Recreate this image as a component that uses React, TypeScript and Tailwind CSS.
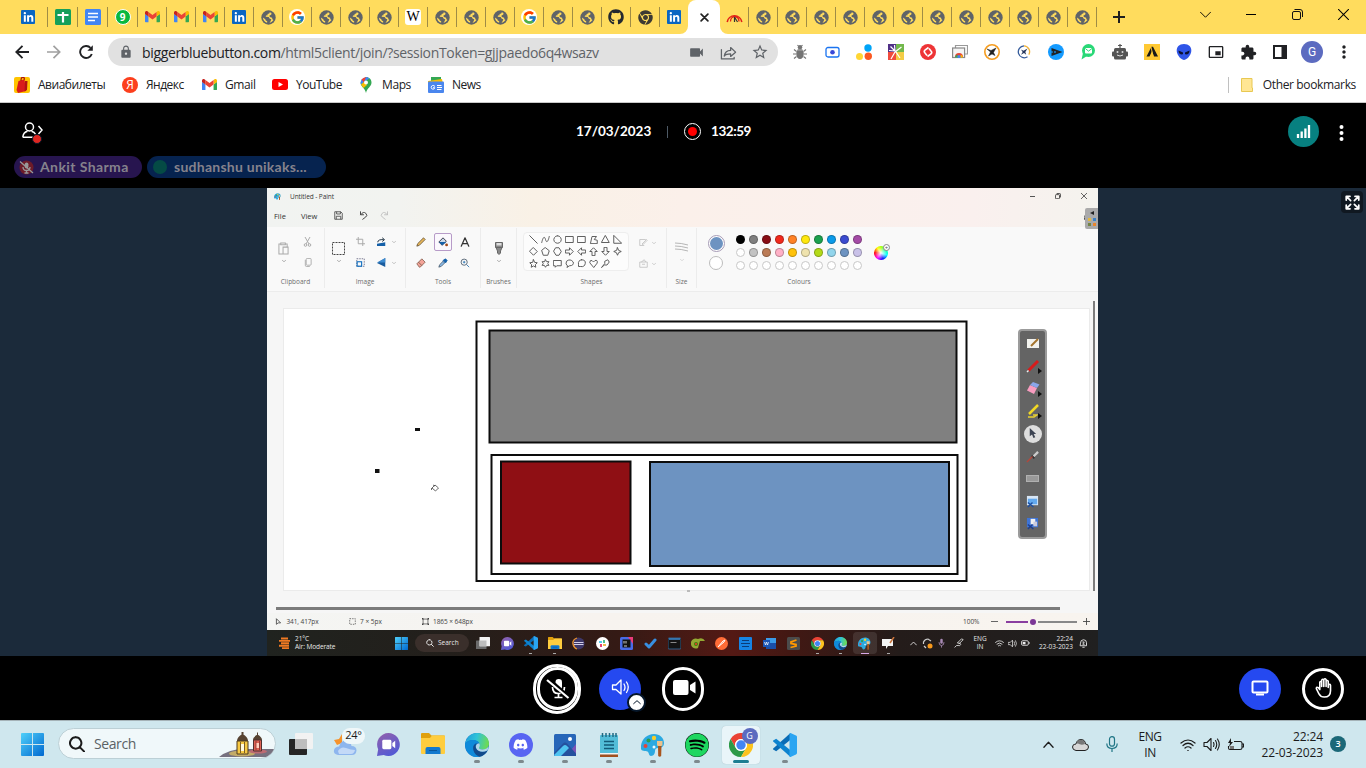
import React from "react";
import { MdLock, MdVideocam, MdStarBorder, MdExtension, MdMoreVert, MdPictureInPictureAlt } from "react-icons/md";
import { FcGoogle } from "react-icons/fc";
import { FaGithub, FaDiscord, FaSpotify, FaLinkedinIn, FaChrome } from "react-icons/fa";

type SP = { w?: number; h?: number; v?: string; c?: string; children: React.ReactNode };
const S = ({ w = 16, h, v = "0 0 24 24", c = "", children }: SP) => (
  <svg width={w} height={h ?? w} viewBox={v} fill="none" className={"shrink-0 " + c}>
    {children}
  </svg>
);
const Line = ({ w = 12, d, c = "", sw = 1.5, v }: { w?: number; d: string; c?: string; sw?: number; v?: string }) => (
  <S w={w} c={c} v={v}>
    <path d={d} stroke="currentColor" strokeWidth={sw} strokeLinecap="round" strokeLinejoin="round" />
  </S>
);

/* ---------- logos ---------- */
const LinkedIn = () => (
  <div className="flex h-3.5 w-3.5 items-center justify-center rounded-[1px] bg-[#0a66c2] text-white">
    <FaLinkedinIn size={11} />
  </div>
);
const Globe = () => (
  <S w={15} v="0 0 15 15">
    <circle cx="7.500" cy="7.500" r="7.200" fill="#5f6368" />
    <path d="M8.800 2.300L8.200 3.500 6.500 4 6.600 5.300 5 5.600 4.700 6.700 7.700 6.900 8.800 8.700 10.300 9.300 9.700 11 8.500 12.900Q11.200 12.300 12.500 10L11.400 9.200 11.100 7.700 8.900 7.100 8.300 5.700 10.300 4.600 10.500 3z" fill="#ffdc5d" />
    <path d="M1.900 7.600L4.300 9.300 4.800 10.500 6.200 11.300 6.100 12.800Q2.200 11.600 1.900 7.600z" fill="#ffdc5d" />
  </S>
);
const Google = () => (
  <div className="flex h-4 w-4 items-center justify-center rounded-full bg-white">
    <FcGoogle size={15} />
  </div>
);
const Gmail = ({ w = 15 }: { w?: number }) => (
  <S w={w} h={w * 0.75} v="0 0 24 18">
    <path fill="#4285f4" d="M1.600 18h3.900V8.700L0 4.500v11.900C0 17.300.7 18 1.600 18z" />
    <path fill="#34a853" d="M18.500 18h3.900c.9 0 1.600-.7 1.600-1.600V4.500l-5.500 4.200z" />
    <path fill="#fbbc04" d="M18.500 1.600v7.100L24 4.600V2.500c0-2-2.300-3.200-3.900-2z" />
    <path fill="#ea4335" d="M5.500 8.700V1.600L12 6.500l6.500-4.900v7.100L12 13.600z" />
    <path fill="#c5221f" d="M0 2.500v2.100l5.500 4.100V1.600L3.900.5C2.300-.7 0 .5 0 2.500z" />
  </S>
);
const Chrome = ({ w = 24 }: { w?: number }) => (
  <S w={w}>
    <path fill="#ea4335" d="M12 6h10.400A12 12 0 0 0 1.600 6l5.200 9A6 6 0 0 1 12 6z" />
    <path fill="#2d9a48" d="M6.800 15L1.600 6A12 12 0 0 0 12 24l5.200-9A6 6 0 0 1 6.800 15z" />
    <path fill="#fcc31e" d="M12 6h10.400A12 12 0 0 1 12 24l5.200-9A6 6 0 0 0 12 6z" />
    <circle cx="12" cy="12" r="6" fill="#fff" />
    <circle cx="12" cy="12" r="4.700" fill="#4285f4" />
  </S>
);
const Edge = ({ w = 24 }: { w?: number }) => (
  <S w={w}>
    <defs>
      <linearGradient id="eg" x1="0" y1="0" x2="24" y2="6" gradientUnits="userSpaceOnUse">
        <stop stopColor="#1f9bdc" />
        <stop offset=".5" stopColor="#2fc3d8" />
        <stop offset="1" stopColor="#6edb52" />
      </linearGradient>
    </defs>
    <circle cx="12" cy="12" r="12" fill="#1272c4" />
    <path fill="url(#eg)" d="M0 11C1 4.500 6 0 12 0c7 0 12 5 12 10.500 0 4-3 6-6.500 6-3 0-4.300-1.300-3.500-2.500C15.500 11.500 14 8 10 7.300 6 6.600 2 8 0 11z" />
    <path fill="#0f8ada" d="M0 11c2-3 6-4.500 10-3.700 2 .4 3.300 1.500 4 2.700-3-.5-5.800 1.500-5.800 5 0 4 2.600 7.300 6.300 8.700C7 25.500 0 19.500 0 11z" />
    <path fill="#114a8b" d="M8.200 15c0-2.300 1.300-4 3.300-4.700-1 1.600-1.300 3-.3 5 1.300 3 5.500 4.800 11.300 2.200-1.500 3.300-4.500 5.600-8 6.200-3.700-1.400-6.300-4.700-6.300-8.700z" />
    <path fill="#cfe7ee" d="M14.100 10.300c1 1.400.9 2.700.2 3.700-.9 1.200.2 2.500 3.200 2.500 2.500 0 4.800-1 5.900-2.900.3 1.300-.4 3-1 3.900-5 2.400-9.800 1-11.200-2.200-1-2.200.4-4.800 2.900-5z" opacity=".85" />
  </S>
);
const VSCode = ({ w = 24 }: { w?: number }) => (
  <S w={w}>
    <path fill="#0a6cb5" d="M17.500 0v6.700L3.200 18.200.2 16.500c-.3-.3-.3-.8 0-1.100z" />
    <path fill="#0d83cf" d="M17.500 24v-6.700L3.200 5.800.2 7.500c-.3.3-.3.800 0 1.100z" />
    <path fill="#2aa5f2" d="M17.500 0L23 2.500c.6.300 1 .8 1 1.400v16.200c0 .6-.4 1.100-1 1.400L17.500 24c-.7 0-.7 0-1-.5V.5z" />
  </S>
);
const WinLogo = ({ w = 23 }: { w?: number }) => (
  <S w={w}>
    <defs>
      <linearGradient id="wl" x1="0" y1="0" x2="24" y2="24" gradientUnits="userSpaceOnUse">
        <stop stopColor="#4fd0fa" />
        <stop offset="1" stopColor="#0068d0" />
      </linearGradient>
    </defs>
    <path fill="url(#wl)" d="M0 1q0-1 1-1h10.500v11.500H0zM12.500 0H23q1 0 1 1v10.500H12.500zM0 12.500h11.500V24H1q-1 0-1-1zM12.500 12.500H24V23q0 1-1 1H12.500z" />
  </S>
);
const TaskView = ({ w = 24, dark = true }: { w?: number; dark?: boolean }) => (
  <S w={w} h={w * 0.92} v="0 0 24 22">
    <rect x="0" y="6" width="18" height="16" rx="1" fill={dark ? "#252525" : "#6b6b6b"} />
    <rect x="6" y="0" width="18" height="16" rx="1" fill="#f2f2f2" />
    <rect x="6" y="6" width="12" height="10" fill="#bdbdbd" />
  </S>
);
const Chat = ({ w = 23 }: { w?: number }) => (
  <S w={w}>
    <defs>
      <linearGradient id="ct" x1="4" y1="0" x2="16" y2="24" gradientUnits="userSpaceOnUse">
        <stop stopColor="#9061ae" />
        <stop offset="1" stopColor="#5059d6" />
      </linearGradient>
    </defs>
    <path fill="url(#ct)" d="M12 0a12 12 0 1 1-5 23L0 24l1.200-7A12 12 0 0 1 12 0z" />
    <rect x="5.500" y="7" width="9.500" height="10" rx="1.500" fill="#fff" />
    <path d="M16 10.500l3-2.500v8l-3-2.500z" fill="#fff" />
  </S>
);
const Folder = ({ w = 24 }: { w?: number }) => (
  <S w={w} h={w * 0.92} v="0 0 24 22">
    <path fill="#e0a00c" d="M0 1q0-1 1-1h7l2.500 2.500H23q1 0 1 1V10H0z" />
    <path fill="#ffcd3e" d="M0 5h9l2-2.500h12q1 0 1 1V20q0 1-1 1H1q-1 0-1-1z" />
    <path fill="#1279cf" d="M4.500 21v-5q0-2 2-2h11q2 0 2 2v5z" />
    <path stroke="#0a5599" d="M8 17.500h8" />
  </S>
);
const Palette = ({ w = 24 }: { w?: number }) => (
  <S w={w}>
    <path fill="#2ba9e1" d="M13 1c6 0 10 4 10 9 0 4-3 5-6 5-2 0-3 1-3 3s-1 5-4 5c-2 0-2-3-3-4-1-1.500-6 0-7-3C-1 8 5 1 13 1z" />
    <circle cx="13" cy="5" r="2.200" fill="#f8ce2a" />
    <circle cx="7.500" cy="7.500" r="2" fill="#2d9b4a" />
    <circle cx="4.500" cy="13" r="2" fill="#e2453a" />
    <circle cx="13" cy="14" r="1.500" fill="#e9f8ff" />
    <path fill="#a9551d" d="M17 12h3.500l-.3 11q-1.500 1.500-3 0z" />
    <path fill="#ecc28c" d="M16 8h5.500v4.500q-2.700 1-5.500 0z" />
  </S>
);

/* ---------- tab strip ---------- */
const Tab = ({ children, wide, last }: { children: React.ReactNode; wide?: boolean; last?: boolean }) => (
  <div className={"flex h-5 shrink-0 items-center justify-center " + (last ? "w-7 " : "border-r border-[#a08c45] ") + (wide ? "w-[30px]" : last ? "" : "w-[29px]")}>
    {children}
  </div>
);
const TabStrip = () => (
  <div className="flex h-[34px] items-center bg-[#ffdc5d]">
    <div className="flex h-5 w-12 shrink-0 items-center border-r border-[#a08c45] pl-[21px]"><LinkedIn /></div>
    <Tab wide>
      <S w={16} v="0 0 16 16"><rect width="16" height="16" rx="1.500" fill="#159f5a" /><path d="M2.500 6h11M8 3v10.500" stroke="#fff" strokeWidth="2.200" /></S>
    </Tab>
    <Tab wide>
      <S w={16} v="0 0 16 16"><rect width="16" height="16" rx="1.500" fill="#4285f4" /><path d="M3 4.500h10M3 8h10M3 11.500h7" stroke="#fff" strokeWidth="1.600" /></S>
    </Tab>
    <Tab wide>
      <div className="flex h-4 w-4 items-center justify-center rounded-full border border-white bg-[#09b83e] font-['Open_Sans',sans-serif] text-[10px] font-bold leading-none text-white">9</div>
    </Tab>
    <Tab><Gmail /></Tab><Tab><Gmail /></Tab><Tab><Gmail /></Tab>
    <Tab><LinkedIn /></Tab>
    <Tab><Globe /></Tab><Tab><Google /></Tab>
    <Tab><Globe /></Tab><Tab><Globe /></Tab><Tab><Globe /></Tab>
    <Tab>
      <div className="flex h-4 w-4 items-center justify-center rounded-[3px] bg-white font-['Liberation_Serif',serif] text-[14px] leading-none text-black">W</div>
    </Tab>
    <Tab><Globe /></Tab><Tab><Globe /></Tab><Tab><Globe /></Tab>
    <Tab><Google /></Tab><Tab><Globe /></Tab><Tab><Globe /></Tab>
    <Tab><FaGithub size={16} className="text-[#24292f]" /></Tab>
    <Tab><FaChrome size={15} className="text-[#3d3a33]" /></Tab>
    <Tab last><LinkedIn /></Tab>
    <div className="relative flex h-[34px] w-8 shrink-0 items-center justify-center rounded-t-lg bg-white">
      <Line w={9} d="M3 3l18 18M21 3L3 21" sw={4.500} c="text-[#222]" />
      <S w={8} v="0 0 8 8" c="absolute bottom-0 -left-2"><path d="M8 0v8H0a8 8 0 0 0 8-8z" fill="#fff" /></S>
      <S w={8} v="0 0 8 8" c="absolute bottom-0 -right-2"><path d="M0 0v8h8a8 8 0 0 1-8-8z" fill="#fff" /></S>
    </div>
    <Tab>
      <S w={17} h={11} v="0 0 17 11">
        <path d="M1.200 10A7.400 7.400 0 0 1 15.800 10" stroke="#e32118" strokeWidth="1.600" />
        <path d="M4.500 9.500C4.500 6 7 4.500 9 4.500M8 4.500c4 0 5 2.500 5 5" stroke="#e32118" strokeWidth="1.300" />
        <path d="M8.500 5v5M8.500 5l3 5" stroke="#333" strokeWidth="1.200" />
      </S>
    </Tab>
    {Array.from({ length: 12 }, (_, i) => <Tab key={i}><Globe /></Tab>)}
    <div className="flex w-11 justify-center"><Line w={12} d="M12 1v22M1 12h22" sw={4} c="text-[#1f1f1f]" /></div>
    <div className="ml-auto flex h-[28px] items-center self-start">
      <div className="flex w-[46px] justify-center"><Line w={11} d="M1 7l11 11L23 7" sw={2} /></div>
      <div className="flex w-[46px] justify-center"><div className="h-px w-2.5 bg-black" /></div>
      <div className="flex w-[46px] justify-center">
        <S w={11} v="0 0 11 11"><rect x=".5" y="2.500" width="8" height="8" rx="1.500" stroke="#111" /><path d="M2.500.5H8q2.500 0 2.500 2.500v5" stroke="#111" /></S>
      </div>
      <div className="flex w-[46px] justify-center"><Line w={11} d="M1 1l22 22M23 1L1 23" sw={2.200} /></div>
    </div>
  </div>
);

/* ---------- toolbar ---------- */
const Ext = ({ children }: { children: React.ReactNode }) => <div className="flex h-8 w-8 shrink-0 items-center justify-center">{children}</div>;
const Toolbar = () => (
  <div className="flex h-9 items-center bg-white pr-1.5 text-[#202124]">
    <div className="flex w-[108px] items-center pl-[6px]">
      <Ext><S w={14} v="0 0 14 14"><path d="M14 7H1.500M7.500.8L1.300 7l6.200 6.200" stroke="#202124" strokeWidth="1.900" /></S></Ext>
      <Ext><S w={14} v="0 0 14 14"><path d="M0 7h12.500M6.500.8L12.700 7l-6.200 6.200" stroke="#a0a0a0" strokeWidth="1.700" /></S></Ext>
      <Ext><S w={14} v="0 0 14 14"><path d="M12.800 9a6 6 0 1 1-1.300-6.200" stroke="#202124" strokeWidth="1.900" /><path d="M13.800.3v5.400H8.400z" fill="#202124" /></S></Ext>
    </div>
    <div className="flex h-7 w-[670px] shrink-0 items-center rounded-full bg-[#e1e1e1] pr-0.5 pl-[11px] text-[#5f6368]">
      <MdLock size={14} />
      <div className="ml-[9px] w-[538px] font-['Open_Sans',sans-serif] text-[14px] tracking-[-0.34px] whitespace-nowrap">
        <span className="text-[#202124]">biggerbluebutton.com</span>/html5client/join/?sessionToken=gjjpaedo6q4wsazv
      </div>
      <Ext><MdVideocam size={17} /></Ext>
      <Ext><Line w={17} d="M2 8v13h18v-2M6 17c1-6 5-8 9-8V5l7 6.500-7 6V14c-4 0-7 .5-9 3z" sw={1.800} /></Ext>
      <Ext><MdStarBorder size={18} /></Ext>
    </div>
    <div className="flex flex-1 items-center justify-end">
      <Ext>
        <S w={16} v="0 0 16 16">
          <ellipse cx="8" cy="9.800" rx="3.800" ry="5.200" fill="#747474" /><circle cx="8" cy="3.300" r="2.200" fill="#747474" />
          <path d="M5.500 1l1.200 1.500M10.500 1L9.300 2.500M4.500 7.500L2 5.500M4 10H1M4.500 12.500L2 14.500M11.500 7.500L14 5.500M12 10h3M11.500 12.500l2.500 2" stroke="#747474" strokeWidth="1.100" />
          <path d="M5 6h6" stroke="#bdbdbd" strokeWidth=".8" />
        </S>
      </Ext>
      <Ext><S w={15} v="0 0 15 15"><rect x="1" y="2.500" width="13" height="9.500" rx="2" stroke="#1a73f0" strokeWidth="1.300" /><circle cx="7.500" cy="7.300" r="2.300" fill="#3949d8" /></S></Ext>
      <Ext><S w={16} v="0 0 16 16"><circle cx="12" cy="4" r="3.700" fill="#00a4f8" /><circle cx="3.500" cy="12.500" r="3.500" fill="#ffd633" /><circle cx="12.300" cy="12.300" r="3.700" fill="#fb5821" /></S></Ext>
      <Ext>
        <S w={16} v="0 0 16 16">
          <path fill="#503087" d="M0 0h8v8H0z" /><path fill="#72b84b" d="M8 0h8v8H8z" /><path fill="#f04b3d" d="M0 8h8v8H0z" /><path fill="#f3cc45" d="M8 8h8v8H8z" />
          <path d="M7 7L2.500 2.500M7 7L6.500 1M7 7L1 6.500M7 8l6.500-5M7 8L3 15M8 8l4 6" stroke="#fff" strokeWidth="1.200" />
        </S>
      </Ext>
      <Ext><S w={16} v="0 0 16 16"><circle cx="8" cy="8" r="8" fill="#ee3436" /><path d="M8.500 3.500L5 6q-1.500 1.500 0 3l2 2.500M7.500 12.500L11 10q1.500-1.500 0-3L9 4.500" stroke="#fff" strokeWidth="1.600" /></S></Ext>
      <Ext>
        <S w={16} v="0 0 16 16">
          <path d="M3.500 4V1.500h12V10H13" stroke="#999" strokeWidth="1.200" /><rect x=".6" y="4" width="12" height="9.500" stroke="#888" strokeWidth="1.200" fill="#f4f4f4" />
          <path d="M3 13a4 4 0 0 1 8 0z" fill="#ea4335" /><path d="M3 13.500a4 4 0 0 1 2-3l1.500 3z" fill="#34a853" /><path d="M11 13.500a4 4 0 0 0-2-3l-1 3z" fill="#fbbc04" /><circle cx="7" cy="12.500" r="1.600" fill="#4285f4" />
        </S>
      </Ext>
      <Ext><S w={16} v="0 0 16 16"><circle cx="8" cy="8" r="7.200" stroke="#f59d20" strokeWidth="1.600" /><path d="M3 5l4 1.500 5-2.500-2.500 4.500 1.500 3-3-1.500-3.500 2L6.500 8z" fill="#222" stroke="#222" strokeWidth=".5" /></S></Ext>
      <Ext><S w={14} v="0 0 16 16"><path d="M12 13.500A6.800 6.800 0 1 1 8 1" stroke="#365c9c" strokeWidth="1.500" /><path d="M8 1a6.700 6.700 0 0 1 5.500 10" stroke="#f2b43d" strokeWidth="1.500" /><path d="M4.500 5l3 1.500L12 4 9.500 8l1 3L8 9l-3.500 2L6.500 8z" fill="#24365c" /></S></Ext>
      <Ext><S w={16} v="0 0 16 16"><circle cx="8" cy="8" r="8" fill="#159bff" /><path d="M3.500 4L14.500 8 3.500 12z" fill="#222" /><path d="M0 8h5M7 7v2" stroke="#159bff" strokeWidth="1.200" /></S></Ext>
      <Ext><S w={16} v="0 0 16 16"><circle cx="8.500" cy="6.500" r="6.500" fill="#29d877" /><path d="M3 9L1.500 15.500 7 12z" fill="#29d877" /><rect x="5" y="4" width="7" height="5.500" rx="1" fill="#fff" /><path d="M5.300 4.500l3.200 2.600L12 4.500" stroke="#29d877" /></S></Ext>
      <Ext><S w={16} v="0 0 16 16"><path d="M8 0v4M6 1.500h4" stroke="#555" strokeWidth="1.200" /><rect x="2" y="4" width="12" height="11.500" rx="1.500" fill="#555" /><rect y="7.500" width="16" height="5" rx="1" fill="#555" /><circle cx="5.500" cy="8" r="1" fill="#ddd" /><circle cx="10.500" cy="8" r="1" fill="#ddd" /><path d="M5 11q3 2 6 0" stroke="#ddd" /></S></Ext>
      <Ext><S w={16} v="0 0 16 16"><path fill="#ffc933" d="M0 0h16v16H0z" /><path d="M2.500 12.500h3L8 7l2 5.500h4L9 2.800H7.500z" fill="#181818" /><path d="M7 3l2 9" stroke="#ffc933" strokeWidth=".9" /></S></Ext>
      <Ext><S w={16} v="0 0 16 16"><path fill="#2f55e8" d="M8 0c5 0 7.500 3 7.300 7C15 12 10 16 8 16S1 12 .7 7C.5 3 3 0 8 0z" /><path d="M2.500 6.500l4.500 2q.5 2-1 2-3.500 0-3.500-4zM13.500 6.500L9 8.500q-.5 2 1 2 3.500 0 3.500-4z" fill="#0b1032" /></S></Ext>
      <Ext><MdPictureInPictureAlt size={16} /></Ext>
      <Ext><MdExtension size={17} /></Ext>
      <Ext><S w={14} v="0 0 14 14"><rect x="1" y="1" width="12" height="12" stroke="#202124" strokeWidth="2" /><path d="M8.500 1H13v12H8.500z" fill="#202124" /></S></Ext>
      <Ext><div className="flex h-[22px] w-[22px] items-center justify-center rounded-full bg-[#5c6bc0] font-['Roboto',sans-serif] text-[12px] text-white">G</div></Ext>
      <Ext><MdMoreVert size={20} /></Ext>
    </div>
  </div>
);

const Bm = ({ icon, label, c, t = "tracking-[-0.2px]" }: { icon: React.ReactNode; label: string; c: string; t?: string }) => (
  <div className={"flex shrink-0 items-center gap-2 " + c}>
    <div className="flex w-4 shrink-0 justify-center">{icon}</div>
    <span className={"whitespace-nowrap leading-4 " + t}>{label}</span>
  </div>
);
const Bookmarks = () => (
  <div className="flex h-[33px] items-center border-b border-[#c9c9c9] bg-white pr-2.5 pb-[3px] pl-3.5 font-['Open_Sans',sans-serif] text-[12px] text-[#202124]">
    <Bm c="w-[108px]" t="tracking-[-0.48px]" label="Авиабилеты" icon={<S w={16} v="0 0 16 16"><rect width="16" height="16" rx="2" fill="#ffc400" /><path d="M4.500 4l6-1.500L12 14l-8 2-1.500-3z" fill="#d91b1b" /><path d="M7 4q0-4 2-3.700Q11 .5 10 3" stroke="#a11" strokeWidth="1.200" /><path d="M11 4h2.500L13 13l-2.500 1.500z" fill="#b31212" /></S>} />
    <Bm c="w-[79px]" t="tracking-[-0.5px]" label="Яндекс" icon={<div className="flex h-4 w-4 items-center justify-center rounded-full bg-[#fc3f1d] text-[12px] leading-none text-white">Я</div>} />
    <Bm c="w-[71px]" t="tracking-[-0.4px]" label="Gmail" icon={<Gmail />} />
    <Bm c="w-[86px]" t="tracking-[-0.48px]" label="YouTube" icon={<S w={16} h={11} v="0 0 16 11"><rect width="16" height="11" rx="2.500" fill="#f00" /><path d="M6.500 3l4.500 2.500L6.500 8z" fill="#fff" /></S>} />
    <Bm c="w-[70px]" t="tracking-[-0.4px]" label="Maps" icon={<S w={16} v="0 0 16 16"><path d="M8 0c3 0 5.500 2.300 5.500 5.500C13.500 9.500 9 11 8 16 7 11 2.500 9.500 2.500 5.500z" fill="#34a853" /><path d="M8 0L3.500 2.500Q2 5 3 7.500L8 3.500 11.500 1.500Q10 0 8 0z" fill="#4285f4" /><path d="M3.500 2.500Q5 .5 8 0L6 5.500z" fill="#ea4335" /><path d="M3 7.500L6 5l3 3-3.500 3z" fill="#fbbc04" /><circle cx="8" cy="5.500" r="2" fill="#fff" /></S>} />
    <Bm c="" t="tracking-[-0.5px]" label="News" icon={<S w={16} v="0 0 16 16"><path d="M3 0h10v6H3z" fill="#34a853" /><path d="M0 4l14-2 1 5H0z" fill="#fbbc04" /><rect y="4.500" width="16" height="11.500" rx="1" fill="#4a86ee" /><path d="M7 9.500q-1-1.200-2.300-1-1.500.3-1.500 2 0 1.500 1.700 1.700 1.800 0 1.800-1.500H5M9 8.500h4.500M9 10.500h5M9 12.500h4.500" stroke="#fff" /></S>} />
    <div className="ml-auto flex items-center">
      <div className="h-4 w-px bg-[#c0c0c0]" />
      <S w={12} h={14} v="0 0 12 14" c="ml-3 mr-2.5"><path d="M.5.500h10.500V10h.5v3.500H.5z" fill="#ffe694" stroke="#e8c852" /></S>
      <span className="leading-4 tracking-[-0.35px]">Other bookmarks</span>
    </div>
  </div>
);

/* ---------- meeting ---------- */
const MeetingHeader = () => (
  <div className="flex h-[85px] flex-col bg-black font-['Lato',sans-serif]">
    <div className="flex h-[57px] items-center">
      <div className="relative ml-[22px] flex h-6 w-[554px] items-start text-white">
        <S w={21} h={17} v="0 0 21 17" c="mt-[2px]">
          <circle cx="7.500" cy="5" r="4" stroke="#fff" strokeWidth="1.500" />
          <path d="M.8 15.200q.4-5 4.700-6M9.500 9.200q3 .8 4 3M.8 15.200h10M16.500 4l3.500 4-3.500 4" stroke="#fff" strokeWidth="1.500" />
        </S>
        <div className="absolute top-[14px] left-[10px] h-2.5 w-2.5 rounded-full border border-[#06172a] bg-[#df2721]" />
      </div>
      <div className="flex items-center text-[13.500px] font-bold leading-none text-white">
        <span className="w-[91px] pt-px">17/03/2023</span>
        <span className="h-3 w-px bg-[#4e5a66]" />
        <div className="mr-2.5 ml-[16px] flex h-[17px] w-[17px] items-center justify-center rounded-full border-[1.5px] border-white"><div className="h-[9px] w-[9px] rounded-full bg-[#f00]" /></div>
        <span className="pt-px tracking-[-0.45px]">132:59</span>
      </div>
      <div className="ml-auto flex items-center">
        <div className="flex h-[31px] w-[31px] items-center justify-center rounded-full bg-[#078080]">
          <S w={15} v="0 0 15 15"><path d="M2 10v4M5.700 7.500V14M9.400 4.500V14M13 1v13" stroke="#fff" strokeWidth="2.300" /></S>
        </div>
        <S w={5} h={16} v="0 0 5 16" c="mr-[22px] ml-[20px] mt-0.5"><circle cx="2.500" cy="2" r="2" fill="#fff" /><circle cx="2.500" cy="8" r="2" fill="#fff" /><circle cx="2.500" cy="14" r="2" fill="#fff" /></S>
      </div>
    </div>
    <div className="flex h-[22px] -translate-y-1 gap-[5px] pl-3.5 text-[14px] font-bold text-[#85828c]">
      <div className="flex w-32 items-center rounded-full bg-[#27154f] pl-[5px]">
        <S w={15} v="0 0 15 15"><circle cx="7.500" cy="7.500" r="7" fill="#6d1b28" /><rect x="5.800" y="2.500" width="3.600" height="6" rx="1.800" fill="#999" /><path d="M4 7q0 3.500 3.500 3.500T11 7M7.500 10.500V13M5.500 13h4M1 1.500L14 13" stroke="#999" strokeWidth="1.300" /></S>
        <span className="ml-1.5 pb-0.5 tracking-[0.4px]">Ankit Sharma</span>
      </div>
      <div className="flex w-[179px] items-center rounded-full bg-[#06234f] pl-[6px]">
        <div className="h-3.5 w-3.5 rounded-full bg-[#054b45]" />
        <span className="ml-[7px] pb-0.5 tracking-[0.25px]">sudhanshu unikaks...</span>
      </div>
    </div>
  </div>
);

/* ---------- paint window ---------- */
const Chev = ({ c = "text-[#888]" }: { c?: string }) => <Line w={4} d="M2 7l10 10L22 7" sw={4} c={c} />;
const Group = ({ label, c, children }: { label: string; c: string; children: React.ReactNode }) => (
  <div className={"flex h-[60px] shrink-0 flex-col border-[#ececec] " + c}>
    <div className="flex h-[48px] items-center justify-center">{children}</div>
    <div className="pt-px text-center leading-[9px] text-[#6c6c6c]">{label}</div>
  </div>
);
const Cell = ({ children }: { children?: React.ReactNode }) => <div className="flex h-[21px] items-center justify-center">{children}</div>;
const shapes = [
  "M1 1l10 10", "M1 10C3 1 5 2 6 6s3 5 5-4", "M6 1a5 5 0 1 0 .1 0", "M1 2h10v8H1z", "M1 2h10v8H1z", "M2 11L4 2h6L7 6l4 1v4z", "M6 1l5 9H1z", "M1 1v10h10z",
  "M6 1l5 5-5 5-5-5z", "M6 1l5 4-2 6H3L1 5z", "M4 1h4l3 5-3 5H4L1 6z", "M1 4h5V1l5 5-5 5V8H1z", "M11 4H6V1L1 6l5 5V8h5z", "M4 11V6H1l5-5 5 5H8v5z", "M4 1v5H1l5 5 5-5H8V1z", "M6 1l1.500 3.500L11 6 7.500 7.500 6 11 4.500 7.500 1 6l3.500-1.500z",
  "M6 1l1.500 3.500 3.500.5-2.500 2.500L9 11 6 9.300 3 11l.5-3.500L1 5l3.500-.5z", "M6 1l1.500 2.500h3L9 6l1.500 2.500h-3L6 11 4.500 8.500h-3L3 6 1.500 3.500h3z", "M1 2h10v7H5l-2 2V9H1z", "M3 9Q0 7 2 3q5-4 9 1 1 5-5 5l-3 2z", "M6 1q6 0 5 5-1 5-6 4H2l0-3Q1 2 6 1z", "M6 11L1 5q0-4 3-3l2 2 2-2q4-1 3 3z", "M1 11l4-5V3l4-2 2 3-3 4H5z",
];
const palette = [
  "bg-black", "bg-[#7f7f7f]", "bg-[#880d15]", "bg-[#f1291c]", "bg-[#ff8226]", "bg-[#ffe80d]", "bg-[#1ba14e]", "bg-[#0a9ae9]", "bg-[#3b4bd0]", "bg-[#a44ba6]",
  "bg-white", "bg-[#c3c3c3]", "bg-[#bb7b56]", "bg-[#ffb0c6]", "bg-[#ffc20a]", "bg-[#efe3ae]", "bg-[#b3da18]", "bg-[#92d5ec]", "bg-[#6d93c1]", "bg-[#c9c1e8]",
  ...Array(10).fill("bg-white"),
];
const Ribbon = () => (
  <div className="flex h-[65px] border-b border-[#ececec] bg-[#f9f9f9] pt-px text-[6.500px]">
    <Group label="Clipboard" c="w-[58px] border-r">
      <div className="grid w-12 grid-cols-2">
        <div className="flex flex-col items-center justify-center gap-1">
          <S w={11} v="0 0 12 14" h={13}><path d="M3 2H1v11h4M8 2h2v3M3 1h5v2H3zM5.500 5.500H11V13H5.500z" stroke="#aaa" strokeWidth="1.100" /></S><Chev />
        </div>
        <div>
          <Cell><S w={9} v="0 0 8 10" h={10}><path d="M1.500 0l4 7M6.500 0l-4 7" stroke="#aaa" strokeWidth="1" /><circle cx="2" cy="8" r="1.300" stroke="#aaa" strokeWidth="1" /><circle cx="6" cy="8" r="1.300" stroke="#aaa" strokeWidth="1" /></S></Cell>
          <Cell><S w={8} v="0 0 8 10" h={9}><rect x="2" y=".5" width="5.500" height="7.500" rx="1" stroke="#aaa" strokeWidth="1" /><path d="M1 2v6q0 1.500 1.500 1.500H6" stroke="#aaa" strokeWidth="1" /></S></Cell>
        </div>
      </div>
    </Group>
    <Group label="Image" c="w-[81px] border-r">
      <div className="-ml-px flex w-[70px]">
        <div className="flex w-[18px] flex-col items-center justify-center gap-1">
          <S w={13} v="0 0 13 13"><rect x=".5" y=".5" width="12" height="12" stroke="#444" strokeDasharray="2 1" /></S><Chev />
        </div>
        <div className="w-[25px]">
          <Cell><S w={9} v="0 0 12 12"><path d="M3 0v9h9M0 3h9v9" stroke="#aaa" strokeWidth="1.300" /></S></Cell>
          <Cell><S w={9} v="0 0 12 12"><rect x="1" y="1" width="10" height="10" stroke="#557" strokeDasharray="2 1.300" /><rect x="1.500" y="5" width="6" height="6" stroke="#1470c0" strokeWidth="1.500" /></S></Cell>
        </div>
        <div className="w-[27px]">
          <Cell><S w={9} v="0 0 12 12" c="mr-1.5"><path d="M0 12V9l11-2v5z" fill="#1560a8" /><path d="M1 7q0-4 8-3.500M7 1l3 2.500L7 6" stroke="#234" strokeWidth="1.300" /></S><Chev c="text-[#aaa]" /></Cell>
          <Cell><S w={9} v="0 0 12 12" c="mr-1.5"><path d="M0 6.500L11 0v12z" fill="#1a5c9e" /><path d="M0 6L11 0v6z" fill="#3d8bd0" /></S><Chev c="text-[#aaa]" /></Cell>
        </div>
      </div>
    </Group>
    <Group label="Tools" c="w-[75px] border-r">
      <div className="grid w-[66px] grid-cols-3">
        <Cell><S w={10} v="0 0 12 12"><path d="M1 11l1-3 7-7 2 2-7 7z" fill="#e6b659" stroke="#574325" strokeWidth=".9" /></S></Cell>
        <Cell><div className="flex h-[18px] w-[18px] shrink-0 items-center justify-center rounded-[2px] border border-[#b79bc8] bg-[#fbf8fd]"><S w={10} v="0 0 12 12"><path d="M1 6l5-5 4 4-5 5z" fill="#cbd7e8" stroke="#223" /><path d="M1 6h9l-5 4z" fill="#1560a8" /><circle cx="10.300" cy="9.500" r="1.700" fill="#a04818" /></S></div></Cell>
        <Cell><Line w={10} v="0 0 12 12" d="M1.500 11L6 1l4.500 10M3 8h6" sw={1.500} c="text-[#333]" /></Cell>
        <Cell><S w={10} v="0 0 12 12"><path d="M1 7l6-6 4 4-6 6H4z" fill="#f3a398" stroke="#754" strokeWidth=".9" /><path d="M3 5l4 4" stroke="#754" /></S></Cell>
        <Cell><S w={10} v="0 0 12 12"><path d="M1 11l1-3 4-4 2 2-4 4z" fill="#8ab9e6" stroke="#345" strokeWidth=".8" /><path d="M6 3l3-2 2 2-2 3z" fill="#1560a8" stroke="#1560a8" /></S></Cell>
        <Cell><S w={10} v="0 0 12 12"><circle cx="5" cy="5" r="3.700" stroke="#456" /><path d="M8 8l3 3M3.500 5h3M5 3.500v3" stroke="#2470b0" /></S></Cell>
      </div>
    </Group>
    <Group label="Brushes" c="w-9 border-r">
      <div className="flex flex-col items-center gap-1">
        <S w={8} v="0 0 8 13" h={13}><path d="M.5.500h7v5h-7zM1 5.500h6L5.500 9v2L4 12.500 2.500 11V9z" fill="#888" stroke="#666" /><path d="M1.500 1h5v2.500h-5z" fill="#ddd" /></S><Chev />
      </div>
    </Group>
    <Group label="Shapes" c="w-[150px] border-r">
      <div className="mt-0.5 mr-1 flex">
        <div className="grid h-[39px] w-[106px] grid-cols-8 items-center justify-items-center rounded border border-[#eee] bg-[#fcfcfc] pr-1 pl-[3px]">
          {shapes.map((d, i) => <Line key={i} w={9} v="0 0 12 12" d={d} sw={1.250} c="text-[#555]" />)}
        </div>
        <div className="ml-[9px] w-[18px]">
          <Cell><S w={9} v="0 0 12 12" c="mr-1"><path d="M1 2h8M1 2v8h6M4 8l6-6 1 1-6 6z" stroke="#bbb" /></S><Chev c="text-[#bbb]" /></Cell>
          <Cell><S w={9} v="0 0 12 12" c="mr-1"><path d="M1 4h10v7H1zM3 4l4-3 2 3M4 7h4" stroke="#bbb" /></S><Chev c="text-[#bbb]" /></Cell>
        </div>
      </div>
    </Group>
    <Group label="Size" c="w-[30px] border-r">
      <div className="flex flex-col items-center gap-1.5">
        <S w={13} v="0 0 13 10" h={10}><path d="M0 1q6 0 13 2M0 4q6 0 13 2M0 7q6 0 13 2" stroke="#b5b5b5" /></S><Chev c="text-[#ccc]" />
      </div>
    </Group>
    <Group label="Colours" c="w-[204px]">
      <div className="ml-0.5 flex w-[186px] items-center">
        <div className="flex w-[18px] flex-col items-center gap-1">
          <div className="h-[17px] w-[17px] rounded-full border border-[#a59ab5] bg-white p-px"><div className="h-full w-full rounded-full bg-[#6d93c1]" /></div>
          <div className="h-[14px] w-[14px] rounded-full border border-[#bdbdbd] bg-white" />
        </div>
        <div className="ml-[9px] grid h-[39px] w-[130px] grid-cols-10 items-center justify-items-center">
          {palette.map((p, i) => <div key={i} className={"h-[9px] w-[9px] rounded-full border " + (i > 19 || i === 10 ? "border-[#c8c8c8] " : "border-black/25 ") + p} />)}
        </div>
        <div className="relative mt-0.5 ml-2.5 h-[14px] w-[14px] rounded-full bg-[conic-gradient(#af0,#0f8_14%,#0ff_30%,#00f_45%,#f0f_60%,#f00_76%,#ff0_90%,#af0)]">
          <div className="h-full w-full rounded-full bg-[radial-gradient(#fff,transparent_65%)]" />
          <div className="absolute -top-[2px] -right-[2px] flex h-[7px] w-[7px] items-center justify-center rounded-full border border-[#888] bg-white text-[6px] leading-none text-[#555]">+</div>
        </div>
      </div>
    </Group>
  </div>
);
const PaintHeader = () => (
  <div className="flex h-[39px] flex-col bg-[linear-gradient(90deg,#f1f3f1_0%,#f2f3f0_16%,#f9f1e6_32%,#fbf0ea_50%,#faf0ee_85%,#f4f3ee_100%)] text-[#333]">
    <div className="flex h-[16px] items-center pr-[11px] pl-[7px] text-[6.500px]">
      <Palette w={7} />
      <span className="ml-[9px] pt-px tracking-[-0.08px]">Untitled - Paint</span>
      <div className="ml-auto flex items-center gap-5 text-[#333]">
        <div className="h-px w-[5px] bg-[#555]" />
        <S w={6} v="0 0 11 11"><rect x=".8" y="3" width="7.500" height="7.500" rx="1.500" stroke="#333" strokeWidth="1.600" /><path d="M3 .8h5q2.300 0 2.300 2.300v5" stroke="#333" strokeWidth="1.600" /></S>
        <Line w={6} d="M1 1l22 22M23 1L1 23" sw={3} />
      </div>
    </div>
    <div className="flex h-[23px] items-center pl-[7px] text-[7.500px]">
      <span className="w-[27px] pt-0.5">File</span><span className="w-[33px] pt-0.5">View</span>
      <S w={9} v="0 0 12 12"><path d="M1 1h8l2 2v8H1zM3.500 1v3h5V1M3 11V7h6v4" stroke="#444" strokeWidth="1.100" /></S>
      <Line w={9} v="0 0 12 12" d="M2 1v4h4M2 5q4-5 7-2t0 5l-4 3" sw={1.300} c="ml-4 text-[#444]" />
      <Line w={9} v="0 0 12 12" d="M10 1v4H6M10 5Q6 0 3 3t0 5l4 3" sw={1.100} c="ml-3 text-[#bbb]" />
    </div>
  </div>
);
const Drawing = () => (
  <svg width="805" height="281" viewBox="284 309 805 281" className="block">
    <g stroke="#0c0c0c" strokeWidth="2">
      <path fill="#fff" d="M476.500 321.500H966.500V581H476.500z" />
      <path fill="#808080" d="M489.500 330.500H956.500V442.500H489.500z" />
      <path fill="#fff" d="M491.500 455H957.500V574H491.500z" />
      <path fill="#8f0f14" d="M501 461.500H630.500V563.500H501z" />
      <path fill="#6d93c1" d="M650 462H949V566H650z" />
    </g>
    <path d="M415 428h5v3h-5zM375 469h4.500v4H375z" fill="#111" />
    <path d="M432 488l3-3 3.500 3-3 3zM433 485l2 1M431.500 488v2" stroke="#444" strokeWidth=".8" fill="none" />
  </svg>
);
const Pb = ({ children, arrow }: { children: React.ReactNode; arrow?: boolean }) => (
  <div className="relative flex h-[22.600px] w-full items-center justify-center">
    {children}
    {arrow && <S w={4} h={6} v="0 0 4 6" c="absolute right-[3px] bottom-[3px]"><path d="M0 0l4 3-4 3z" fill="#111" /></S>}
  </div>
);
const PenBar = () => (
  <div className="absolute top-[141px] left-[751px] flex h-[210px] w-[29px] flex-col items-center rounded-[4px] border-2 border-[#9b9b9b] bg-[#646464] pt-[1px]">
    <Pb><S w={14} v="0 0 14 14"><rect x="1" y="3" width="12" height="9" fill="#f2f2ee" /><path d="M5 10l7-7" stroke="#a5742d" strokeWidth="2" /></S></Pb>
    <Pb arrow><S w={14} v="0 0 14 14"><path d="M2.500 11.500l9.500-9.500" stroke="#d81b1b" strokeWidth="3" /><path d="M1 13l1.500-1.500" stroke="#eee" strokeWidth="1.500" /></S></Pb>
    <Pb arrow><S w={14} v="0 0 14 14"><path d="M1 9.500l3-5.500 7 3-3 6z" fill="#f99cc0" /><path d="M4 4l3-3 6.500 2.500L11 7z" fill="#8aa6ea" /></S></Pb>
    <Pb arrow><S w={14} v="0 0 14 14"><path d="M3 10l9-9" stroke="#f2d824" strokeWidth="2.500" /><path d="M2 13h6l3-2H7" stroke="#e8cf30" strokeWidth="1.300" /></S></Pb>
    <div className="flex h-[22.500px] items-center"><div className="flex h-[18px] w-[18px] items-center justify-center rounded-full bg-[#dedede]"><S w={11} v="0 0 12 12"><path d="M3 0v9l2.500-2 1.500 4 2-1-1.700-3.500H10z" fill="#3c4352" /></S></div></div>
    <Pb><S w={13} v="0 0 14 14"><path d="M8 7l5-5" stroke="#ccc" strokeWidth="2.500" /><path d="M6 6l3 3" stroke="#333" strokeWidth="2" /><path d="M1 13l6-6" stroke="#b5463a" strokeWidth="1.400" /></S></Pb>
    <Pb><div className="h-[7px] w-[13px] border border-[#b0b0b0] bg-[#999]" /></Pb>
    <Pb><S w={13} v="0 0 14 14"><rect x="1" y="1" width="12" height="10" fill="#d8e6f5" /><rect x="2" y="4" width="10" height="6" fill="#62a9ee" /><path d="M2 8l6 5M7 8l-5 5" stroke="#1d4ea0" strokeWidth="1.500" /></S></Pb>
    <Pb><S w={13} v="0 0 14 14"><rect x="1" y="1" width="12" height="10" fill="#3e74d6" /><path d="M5 2h5v6H5z" fill="#f0f0f0" /><path d="M8 5h4v5H8z" fill="#ccd" /><path d="M2 8l6 5M7 8l-5 5" stroke="#1d3f90" strokeWidth="1.500" /></S></Pb>
  </div>
);
const T = ({ children, run, active }: { children: React.ReactNode; run?: boolean; active?: boolean }) => (
  <div className={"relative flex h-[22px] w-[23.850px] shrink-0 items-center justify-center " + (active ? "rounded-sm bg-white/10" : "")}>
    {children}
    {run && <div className={"absolute bottom-0 h-px " + (active ? "w-2 bg-[#d9a9e8]" : "w-[3px] bg-[#aaa]")} />}
  </div>
);
const InnerTaskbar = () => (
  <div className="flex h-[26px] items-center bg-[linear-gradient(90deg,#20231f_0%,#231f1b_22%,#341a15_42%,#541914_56%,#421813_63%,#241c1a_76%,#202020_100%)] text-[6.500px] leading-[8px] text-[#e8e8e8]">
    <div className="flex w-[122.500px] items-center pl-[11px]">
      <S w={13} v="0 0 13 13"><path d="M3 1.500h7M1 3.900h11M3 6.300h8M1 8.700h10M4 11.100h7" stroke="#f07a22" strokeWidth="1.900" /></S>
      <div className="ml-1 tracking-[-0.08px]"><div>21°C</div><div className="whitespace-nowrap">Air: Moderate</div></div>
    </div>
    <T><WinLogo w={13} /></T>
    <div className="mx-[2px] flex h-[18px] w-[54px] items-center justify-center gap-1 rounded-full bg-[#3a2f2b]">
      <Line w={8} d="M10 2a8 8 0 1 0 .1 0M16 16l6 6" sw={3} /><span>Search</span>
    </div>
    <T><TaskView w={14} dark={false} /></T>
    <T><Chat w={13} /></T>
    <T run><VSCode w={14} /></T>
    <T run><Folder w={14} /></T>
    <T><S w={13} v="0 0 13 13"><circle cx="6.500" cy="6.500" r="6" fill="#3e3768" /><path d="M5 1Q0 3 1 7t4 5" stroke="#e8912b" strokeWidth="1.300" /><path d="M2 5.500h9.500M2 7.500h9.500" stroke="#d4d0e8" strokeWidth="1.200" /></S></T>
    <T><S w={13} v="0 0 13 13"><circle cx="6.500" cy="6.500" r="6.500" fill="#fff" /><path d="M3 5h3" stroke="#36c5f0" strokeWidth="1.700" /><path d="M8 3v3" stroke="#2eb67d" strokeWidth="1.700" /><path d="M7 8h3" stroke="#ecb22e" strokeWidth="1.700" /><path d="M5 7v3" stroke="#e01e5a" strokeWidth="1.700" /></S></T>
    <T><S w={13} v="0 0 13 13"><rect width="13" height="13" rx="1.500" fill="#486be8" /><path d="M8 0h5v7z" fill="#ec3b7b" /><rect x="2.500" y="2.500" width="8" height="8" fill="#111" /><path d="M4 4v2.500M6 4v2.500M4 9h3" stroke="#fff" strokeWidth=".8" /></S></T>
    <T><Line w={13} v="0 0 13 13" d="M2 7l3 3 6-7" sw={3} c="text-[#388fe0]" /></T>
    <T><S w={13} v="0 0 13 13"><rect y="1" width="13" height="11" rx="1" fill="#141414" stroke="#3670a5" strokeWidth=".8" /><path d="M1 2h11" stroke="#3d8bd2" strokeWidth="1.500" /><path d="M2.500 5.500h6" stroke="#888" /></S></T>
    <T><S w={14} v="0 0 14 14"><path d="M7 12a5 5 0 1 1 0-9q5-2 7 2H9" fill="#94a832" /><circle cx="5" cy="8" r="2" fill="#471" /><circle cx="5" cy="8" r="1" fill="#f13b27" /></S></T>
    <T><S w={13} v="0 0 13 13"><circle cx="6.500" cy="6.500" r="6.500" fill="#ff6c37" /><path d="M3 10l5-6 2-1-1 2z" stroke="#fff" /></S></T>
    <T><S w={13} v="0 0 13 13"><rect width="13" height="13" rx="1" fill="#1684e4" /><path d="M3 3.500h7M2 6.500h9M3 9.500h7" stroke="#0a3c78" /></S></T>
    <T><S w={13} v="0 0 13 13"><rect x="3" y="1" width="10" height="11" fill="#3b9be8" /><path d="M3 6h10v6H3z" fill="#1a4fa8" /><rect y="3" width="7" height="7" fill="#1b56b5" /><path d="M1.500 5l1 3 1-3 1 3 1-3" stroke="#fff" strokeWidth=".7" /></S></T>
    <T><S w={13} v="0 0 13 13"><rect width="13" height="13" rx="1.500" fill="#4b4b4b" /><path d="M9.500 3L4 5v1.500l5 1V9L3.500 10.500" stroke="#ff9800" strokeWidth="1.800" /></S></T>
    <T run><Chrome w={13} /></T>
    <T run><Edge w={13} /></T>
    <T run active><Palette w={13} /></T>
    <T run><S w={13} v="0 0 13 13"><path d="M0 2h11v7H6l-2 3V9H0z" fill="#f4f4f4" /><path d="M8 6l4-6" stroke="#c9733a" strokeWidth="1.500" /></S></T>
    <div className="ml-auto flex items-center pr-[10px]">
      <Line w={7} d="M2 17L12 7l10 10" sw={3} c="mr-[5px]" />
      <S w={11} v="0 0 11 11" c="mr-[5px]"><path d="M1.500 6V4Q3 1 6 1l3 2M2 8l2 2" stroke="#ccc" strokeWidth="1.200" /><circle cx="8" cy="8" r="2.500" fill="#f89a1c" /></S>
      <S w={7} v="0 0 8 12" h={10} c="mr-[9px]"><rect x="2.500" y="1" width="3" height="6" rx="1.500" fill="#a88ab5" /><path d="M1 5q0 4 3 4t3-4M4 9v2.500" stroke="#a88ab5" /></S>
      <Line w={10} v="0 0 12 12" d="M1 11q2-3 4-2t3-1-4-2L9 1l2 1-5 5" sw={1} c="mr-[9px]" />
      <div className="mr-[8px] w-[14px] text-center">ENG<br />IN</div>
      <Line w={9} v="0 0 16 14" d="M1 5q7-6 14 0M3.500 8q4.500-4 9 0M6 11q2-2 4 0" sw={1.500} c="mr-1" />
      <Line w={9} v="0 0 16 14" d="M1 5h3l4-4v12l-4-4H1zM11 4q2 3 0 6M13.500 2q3.500 5 0 10" sw={1.300} c="mr-1" />
      <S w={9} v="0 0 16 10" h={6}><rect x="1" y="1" width="12" height="8" rx="2" stroke="#eee" strokeWidth="1.500" /><path d="M3 3h5v4H3zM14 4h2v2h-2z" fill="#eee" /></S>
      <div className="ml-[5px] w-[38px] text-right whitespace-nowrap">22:24<br />22-03-2023</div>
      <Line w={9} v="0 0 12 12" d="M2 9h8V5q0-4-4-4T2 5zM5 11h2M5 4h2L5 7h2" sw={1.200} c="ml-[6px]" />
    </div>
  </div>
);
const PaintWindow = () => (
  <div className="relative flex h-[468px] w-[831px] flex-col overflow-hidden bg-[#f6f6f6] font-['Open_Sans',sans-serif]">
    <PaintHeader />
    <Ribbon />
    <div className="flex h-[321px] flex-col">
      <div className="flex h-[310px] pt-[8px] pl-[16px]">
        <div className="mt-[8px] h-[283px] w-[807px] border border-[#ebebeb] bg-white"><Drawing /></div>
        <div className="mt-[1px] ml-[3px] h-[290px] w-[2px] bg-[#7d7d7d]" />
      </div>
      <div className="mt-[5px] ml-[9px] h-[2.500px] w-[784px] bg-[#7b7b7b]" />
    </div>
    <div className="flex h-[17px] items-center bg-[linear-gradient(90deg,#f4f5f3,#f7f3ef_40%,#f8f4ef)] pl-[8px] text-[6.500px] text-[#444]">
      <S w={7} v="0 0 10 10"><path d="M2 1v8l2.500-2H8z" stroke="#444" strokeWidth="1.200" /></S>
      <span className="ml-[4.500px] w-[62.500px] tracking-[-0.1px]">341, 417px</span>
      <S w={7} v="0 0 10 10"><rect x="1" y="1" width="8" height="8" stroke="#444" strokeDasharray="2 1.500" /></S>
      <span className="ml-[4px] w-[62px]">7 × 5px</span>
      <S w={7} v="0 0 10 10"><rect x="1.500" y="1.500" width="7" height="7" stroke="#444" /><path d="M0 0h2v2H0zM8 0h2v2H8zM0 8h2v2H0zM8 8h2v2H8z" fill="#444" /></S>
      <span className="ml-[4px] tracking-[-0.05px]">1865 × 648px</span>
      <span className="ml-auto">100%</span>
      <div className="ml-[11px] h-px w-[7px] bg-[#666]" />
      <div className="ml-[8px] flex w-[71px] items-center">
        <div className="h-[2px] w-[22px] bg-[#8a3ea0]" />
        <div className="mx-[2px] h-[6px] w-[6px] rounded-full bg-[#7c3796]" />
        <div className="h-[2px] flex-1 bg-[#888]" />
      </div>
      <Line w={7} d="M12 1v22M1 12h22" sw={3} c="mr-[8px] ml-[6.500px]" />
    </div>
    <InnerTaskbar />
    <div className="absolute bottom-[64px] left-[420px] h-[2px] w-[3px] bg-[#bbb]" />
    <PenBar />
    <Line w={6} d="M20 4a6 6 0 1 0 0 12M14 16v6h8" sw={4} c="absolute top-[26px] right-[11px] text-[#555]" />
    <div className="absolute top-[20px] right-0 flex h-[21px] w-[13px] flex-col items-center gap-[3px] rounded-l-[2px] bg-[#aaa] pt-[3px]">
      <S w={4} v="0 0 4 4"><path d="M4 0v4L0 2z" fill="#222" /></S>
      <S w={8} v="0 0 8 8"><path d="M0 0h3v3H0z" fill="#e1b83f" /><path d="M5 0h3v3H5z" fill="#3b82c8" /><path d="M0 5h3v3H0z" fill="#728444" /><path d="M5 5h3v3H5z" fill="#e9862d" /></S>
    </div>
  </div>
);

/* ---------- bottom controls ---------- */
const Controls = () => (
  <div className="flex h-16 items-center bg-black pt-px text-white">
    <div className="ml-[533px] flex h-[50px] w-12 shrink-0 items-center justify-center rounded-full border-[3px] border-white">
      <div className="flex h-[43px] w-[41px] shrink-0 items-center justify-center rounded-full border-[3px] border-white">
        <S w={24} h={20} v="0 0 24 20" c="translate-x-px"><rect x="9.500" y="0" width="6.500" height="11" rx="3.200" fill="#fff" /><path d="M6.500 8q0 6.500 6 6.500t6-6.500M12.500 14v4.500M8.500 18.500h8" stroke="#fff" strokeWidth="1.700" /><path d="M2 0l21 19" stroke="#000" strokeWidth="4.500" /><path d="M1 1l21.500 18" stroke="#fff" strokeWidth="2.200" /></S>
      </div>
    </div>
    <div className="relative ml-[18px] flex h-[42px] w-[42px] items-center justify-center rounded-full bg-[#2549f0]">
      <Line w={19} v="0 0 19 17" d="M1.500 6h3.500l5-5v14l-5-4.500H1.500zM13 5q2 3.500 0 6.500M15.500 3q3.500 5 0 10.500" sw={1.300} c="-translate-y-px" />
      <div className="absolute top-[25px] left-[28px] flex h-[19px] w-[19px] items-center justify-center rounded-full border-[2.500px] border-[#06172a] bg-white text-[#06172a]"><Line w={8} d="M2 17L12 8l10 9" sw={3} /></div>
    </div>
    <div className="ml-[21px] flex h-[44px] w-[42px] items-center justify-center rounded-full border-[3px] border-white">
      <S w={23} h={15} v="0 0 23 15" c="translate-x-px -translate-y-px"><rect width="15.500" height="15" rx="2" fill="#fff" /><path d="M17 5l5.500-3.500v12L17 10z" fill="#fff" /></S>
    </div>
    <div className="ml-auto flex h-[42px] w-[42px] items-center justify-center rounded-full bg-[#2549f0]">
      <S w={18} h={16} v="0 0 18 16" c="-translate-y-px"><rect x="1.500" y="1.500" width="15" height="11" rx="1" stroke="#fff" strokeWidth="2" /><path d="M5 14.500h8" stroke="#fff" strokeWidth="2" /></S>
    </div>
    <div className="mr-[22px] ml-[21px] flex h-[42px] w-[42px] items-center justify-center rounded-full border-[3px] border-white">
      <S w={18} h={20} v="0 0 17 19" c="translate-x-px -translate-y-px"><path d="M4.500 11V4q.8-1.500 1.800 0v4V2q1-1.600 2 0v6-6.500q1.200-1.500 2.200 0V8 3q1-1.400 2 0v6l.2-2.500q1.600-1.500 2 .5V12q0 6-6 6-3.500 0-5-3L1.200 10q0-2 2-.8z" fill="#000" stroke="#fff" strokeWidth="1.500" strokeLinejoin="round" /></S>
    </div>
  </div>
);

/* ---------- host taskbar ---------- */
const App1 = ({ children, run = true, active }: { children: React.ReactNode; run?: boolean; active?: boolean }) => (
  <div className="flex w-11 shrink-0 justify-center">
    <div className={"relative flex h-[38px] w-[38px] items-center justify-center rounded-[4px] " + (active ? "bg-[#e9f5f9] shadow-[0_0_1px_#9fb5bc]" : "")}>
      {children}
      {run && <div className={"absolute bottom-[1px] h-[3px] rounded-full " + (active ? "w-4 bg-[#1b7e92]" : "w-1.5 bg-[#7d898d]")} />}
    </div>
  </div>
);
const Taskbar = () => (
  <div className="flex h-12 items-center border-t border-[#a5b3b8] bg-[#cfe7ee] font-['Open_Sans',sans-serif] text-[12px] text-[#1b1b1b]">
    <div className="flex w-[58px] shrink-0 pl-[21px]"><WinLogo /></div>
    <div className="flex h-[31px] w-[218px] shrink-0 -translate-y-px items-center overflow-hidden rounded-full border border-[#bcd0d6] bg-[#f0f8fa] pl-2.5">
      <Line w={16} d="M10 2a8.500 8.500 0 1 0 .1 0M16.500 17l6 6" sw={3} />
      <span className="ml-[9px] text-[14px] tracking-[-0.4px] text-[#5b6265]">Search</span>
      <S w={56} h={29} v="0 0 56 29" c="ml-auto">
        <path d="M0 28Q10 20 25 20h31v8z" fill="#77717f" />
        <ellipse cx="23" cy="24.500" rx="13" ry="3" fill="#c3ab68" /><ellipse cx="39" cy="22.500" rx="9" ry="2" fill="#bd6b73" />
        <path d="M18 12q0-4 5.500-7 5.500 3 5.500 7zM22.500 3h2v3h-2z" fill="#564332" /><path d="M18 12h11v13H18z" fill="#f7c943" stroke="#4c3a20" /><path d="M21.500 13v11M25.500 13v11" stroke="#5b421f" strokeWidth=".8" /><path d="M22 15h3v7h-3z" fill="#fffae0" />
        <path d="M34 11q0-3 4.500-5.500Q43 8 43 11zM38 3.500h1v3h-1z" fill="#564332" /><path d="M34.500 11h8v11h-8z" fill="#df6254" stroke="#503030" /><path d="M37 12v9M40.500 12v9" stroke="#773030" strokeWidth=".8" /><path d="M37.500 14h2.500v5h-2.500z" fill="#ffd0c0" />
      </S>
    </div>
    <div className="flex w-[47px] shrink-0 justify-center pl-[3px]"><TaskView /></div>
    <div className="relative flex w-[43.500px] shrink-0 justify-center">
      <S w={24} h={22} v="0 0 24 22"><path d="M1 6l5-1 3-5v9l-5 2z" fill="#f6932b" /><path d="M5 21q-5-1-4-5 1-3.500 5-3.500Q8 6 14 7q4 1 4.500 5 5 0 5 4.500Q23 21 19 21z" fill="#8eb6ee" /><path d="M5 17q3-5 8-3t9 2q-1 4-4 4H6z" fill="#c3d9f7" /></S>
      <div className="absolute -top-[6px] left-[19px] flex h-4 w-[23px] items-center justify-center rounded-full bg-[#eff7f9] text-[11px] tracking-[-0.3px]">24°</div>
    </div>
    <App1 run={false}><Chat /></App1>
    <App1 run={false}><Folder /></App1>
    <App1><Edge /></App1>
    <App1><div className="flex h-6 w-6 items-center justify-center rounded-full bg-[#5865f2] text-white"><FaDiscord size={15} /></div></App1>
    <App1><S w={22} v="0 0 22 22"><rect width="22" height="22" rx="1.500" fill="#2766b8" /><path d="M12 22L22 10v12z" fill="#7b55b6" /><path d="M0 19L9 9.500q2-2 4 0l9 10V22H0z" fill="#24519e" /><path d="M0 21l9-9q2-2 4 0l2 2-8 8H1q-1 0-1-1z" fill="#4fc3f0" /><circle cx="16" cy="5" r="2" fill="#fff" /></S></App1>
    <App1><S w={18} h={24} v="0 0 18 24"><rect y="2" width="18" height="19" rx="1" fill="#53bdd8" /><path d="M2.500 0v4M6 0v4M9.500 0v4M13 0v4M16 0v4" stroke="#216a82" strokeWidth="1.500" /><path d="M4 8.500h10M4 12h10M4 15.500h10" stroke="#135a78" strokeWidth="1.500" /><path d="M0 20h18v1.500H0z" fill="#f5f5f5" /><path d="M0 21.500h18V24H0z" fill="#a1501f" /></S></App1>
    <App1><Palette /></App1>
    <App1><div className="rounded-full bg-black"><FaSpotify size={24} className="text-[#1ed760]" /></div></App1>
    <App1 active>
      <Chrome />
      <div className="absolute top-[2px] right-[2px] flex h-4 w-4 items-center justify-center rounded-full bg-[#5c6bc0] text-[9px] text-white">G</div>
    </App1>
    <App1><VSCode /></App1>
    <div className="ml-auto flex items-center">
      <Line w={11} d="M2 18L12 7l10 11" sw={2.800} />
      <S w={17} h={12} v="0 0 17 12" c="ml-[18px]"><path d="M4 11.500q-3.500-.5-3.500-3.500T4 5q1-4.500 5-4.500T13.500 5Q16.500 5 16.500 8T13 11.500z" fill="#d7d7d7" stroke="#222" /><path d="M1 6q2-2 5-1.500 3 2 7 .5Q12.500 1 9 .8 5 1 4 5z" fill="#777" /></S>
      <S w={12} h={17} v="0 0 12 17" c="ml-[17.500px]"><rect x="3.500" y=".7" width="5" height="9.500" rx="2.500" stroke="#1f7585" strokeWidth="1.200" /><path d="M.8 7.500q0 5 5.200 5t5.200-5M6 12.500V16" stroke="#1f7585" strokeWidth="1.200" /></S>
      <div className="ml-[18px] w-[28px] text-center leading-4 tracking-[-0.4px]">ENG<br />IN</div>
      <Line w={16} v="0 0 16 16" d="M1 6q7-6 14 0M3 8.500q5-4.500 10 0M5 11q3-2.500 6 0M7.800 13.500h.4" sw={1.200} c="ml-[16px]" />
      <Line w={17} v="0 0 17 16" d="M1 6h3l4-4v12l-4-4H1zM10.500 6q1 2 0 4M12.500 4q2.500 4 0 8M14.500 2.500q3.500 5.500 0 11" sw={1.100} c="ml-[7px]" />
      <S w={17} h={14} v="0 0 17 14" c="ml-[7px]"><path d="M7 3.500h6q2 0 2 1.500v5q0 1.500-2 1.500H3Q1.500 11.500 1.500 10V8M15 6h1.500v3H15" stroke="#1b1b1b" strokeWidth="1.100" /><path d="M4 0L1 5h2L2 9l4-5H4z" fill="#1b1b1b" /><path d="M3 8h4v3H3z" fill="#777" /></S>
      <div className="ml-[13px] w-[66px] text-right leading-4 tracking-[-0.1px] whitespace-nowrap">22:24<br />22-03-2023</div>
      <div className="mr-[20px] ml-[7px] flex h-4 w-4 -translate-y-px items-center justify-center rounded-full bg-[#1b6878] text-[9px] font-semibold text-white">3</div>
    </div>
  </div>
);

export default function App() {
  return (
    <div className="flex h-[768px] w-[1366px] flex-col overflow-hidden bg-black">
      <TabStrip />
      <Toolbar />
      <Bookmarks />
      <MeetingHeader />
      <div className="flex h-[468px] justify-between bg-[#1b2a3a] pl-[267px]">
        <PaintWindow />
        <div className="mt-[3px] mr-[3px] flex h-[22px] w-[22px] items-center justify-center rounded-sm bg-[#101821] text-white">
          <Line w={15} d="M2 8V2h6M16 2h6v6M22 16v6h-6M8 22H2v-6M3 3l6 6M21 3l-6 6M21 21l-6-6M3 21l6-6" sw={2.800} />
        </div>
      </div>
      <Controls />
      <Taskbar />
    </div>
  );
}
